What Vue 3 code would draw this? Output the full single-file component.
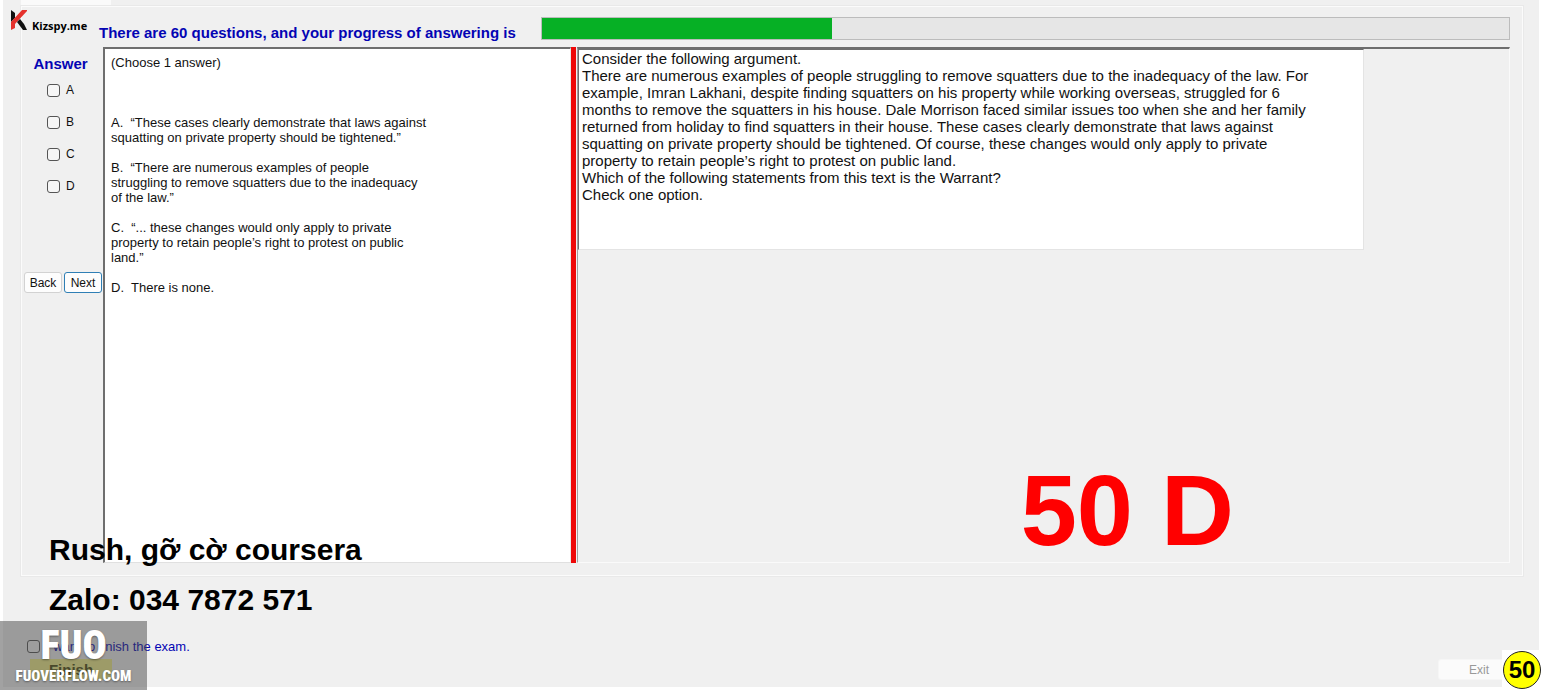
<script setup>
import { ref } from 'vue'

const total = 60
const answered = 18
const options = ['A', 'B', 'C', 'D']
const picked = ref([])
const finished = ref(false)

const choices = `(Choose 1 answer)



A.  “These cases clearly demonstrate that laws against
squatting on private property should be tightened.”

B.  “There are numerous examples of people
struggling to remove squatters due to the inadequacy
of the law.”

C.  “... these changes would only apply to private
property to retain people’s right to protest on public
land.”

D.  There is none.`

const question = `Consider the following argument.
There are numerous examples of people struggling to remove squatters due to the inadequacy of the law. For
example, Imran Lakhani, despite finding squatters on his property while working overseas, struggled for 6
months to remove the squatters in his house. Dale Morrison faced similar issues too when she and her family
returned from holiday to find squatters in their house. These cases clearly demonstrate that laws against
squatting on private property should be tightened. Of course, these changes would only apply to private
property to retain people’s right to protest on public land.
Which of the following statements from this text is the Warrant?
Check one option.`
</script>

<template>
  <div class="page">
    <div class="window">
      <div class="tabs"><span class="tab"></span></div>

      <main class="panel">
        <header class="head">
          <label class="title" for="progress">There are {{ total }} questions, and your progress of answering is</label>
          <progress id="progress" class="bar" :value="answered" :max="total"></progress>
        </header>

        <div class="split">
          <aside class="answers">
            <h2 class="heading">Answer</h2>
            <label v-for="o in options" :key="o" class="option">
              <input v-model="picked" class="check" type="checkbox" :value="o" />{{ o }}
            </label>
            <div class="nav">
              <button class="btn" type="button">Back</button>
              <button class="btn primary" type="button">Next</button>
            </div>
          </aside>
          <section class="choices">{{ choices }}</section>
          <div class="divider"></div>
          <section class="pane">
            <div class="question">{{ question }}</div>
            <div class="stamp">50 D</div>
          </section>
        </div>
      </main>

      <footer class="foot">
        <div class="finish">
          <label class="agree"><input v-model="finished" class="check" type="checkbox" />I want to finish the exam.</label>
          <button class="submit" type="button">Finish</button>
        </div>
        <button class="exit" type="button" disabled>Exit</button>
      </footer>
    </div>

    <div class="brand">
      <svg class="mark" viewBox="0 0 18 21" width="18" height="21" aria-hidden="true">
        <path d="M1 0 L5 3 L5 8 L1 12 Z" fill="#111" />
        <path d="M12 0 L17 0 L17 1 L5 14 L5 18 L1 20 L1 12 Z" fill="#e5322d" />
        <path d="M7 12 L10 9 L14 14 L17 20 L13 20 Z" fill="#111" />
      </svg>
      <span>Kizspy.me</span>
    </div>
    <div class="contact">
      <div>Rush, gỡ cờ coursera</div>
      <div>Zalo: 034 7872 571</div>
    </div>
    <div class="watermark">
      <div class="fuo">FUO</div>
      <div class="site">FUOVERFLOW.COM</div>
    </div>
    <div class="corner"><span class="badge">50</span></div>
  </div>
</template>

<style>
body {
  background: #fff;
}
</style>

<style scoped>
.page {
  position: relative;
  box-sizing: border-box;
  min-height: 100vh;
  display: flex;
  padding: 0 3px 3px;
  font-family: "Liberation Sans", Arial, sans-serif;
  font-size: 13px;
  color: #111;
}
.page * {
  box-sizing: border-box;
}
.window {
  flex: 1;
  min-width: 0;
  display: flex;
  flex-direction: column;
  background: #f0f0f0;
}
.tabs {
  height: 6px;
  padding-left: 18px;
}
.tab {
  display: block;
  width: 90px;
  height: 6px;
  background: #fafafa;
}
.panel {
  flex: 1;
  display: flex;
  flex-direction: column;
  margin: 0 16px 0 18px;
  padding: 0 12px 12px 0;
  border: 1px solid #fbfbfb;
  box-shadow: 0 0 0 1px #e9e9e9;
}
.head {
  display: flex;
  align-items: center;
  gap: 25px;
  height: 40px;
  padding: 2px 0 0 77px;
}
.title {
  padding-top: 8px;
  font-size: 15px;
  font-weight: bold;
  color: #0404b4;
  white-space: nowrap;
}
.bar {
  flex: 1;
  min-width: 0;
  height: 23px;
  appearance: none;
  border: 1px solid #bcbcbc;
  background: #e6e6e6;
}
.bar::-webkit-progress-bar {
  background: #e6e6e6;
}
.bar::-webkit-progress-value {
  background: #06b025;
}
.split {
  flex: 1;
  display: grid;
  grid-template-columns: 81px 468px 5px 1fr;
}
.answers {
  display: flex;
  flex-direction: column;
}
.heading {
  margin: 7px 4px 0 0;
  font-size: 15px;
  line-height: 20px;
  text-align: center;
  color: #0404b4;
}
.option {
  display: flex;
  align-items: center;
  gap: 6px;
  height: 32px;
  padding-left: 25px;
  font-size: 12px;
}
.check {
  appearance: none;
  flex: none;
  width: 13px;
  height: 13px;
  margin: 0;
  border: 1px solid #555;
  border-radius: 3px;
  background: #f6f6f6;
}
.nav {
  display: flex;
  gap: 2px;
  margin-top: 70px;
  padding-left: 2px;
}
.btn {
  width: 38px;
  height: 21px;
  padding: 0;
  border: 1px solid #d2d2d2;
  border-radius: 3px;
  background: #fdfdfd;
  font-family: inherit;
  font-size: 12px;
  color: #111;
}
.primary {
  border-color: #2f7fb5;
}
.choices {
  padding: 6px 6px;
  border-top: 2px solid #6e6e6e;
  border-left: 2px solid #6e6e6e;
  border-right: 1px solid #e9e9e9;
  border-bottom: 1px solid #e0e0e0;
  background: #fff;
  line-height: 15px;
  white-space: pre-wrap;
}
.divider {
  background: #ee0808;
}
.pane {
  position: relative;
  margin-left: 1px;
  border: 1px solid #fafafa;
  border-top: 2px solid #6e6e6e;
  border-left: 1px solid #a0a0a0;
}
.question {
  width: 786px;
  max-width: 100%;
  min-height: 201px;
  padding: 0 3px;
  border: 1px solid #e4e4e4;
  border-top: 1px solid #6e6e6e;
  border-left: 1px solid #6e6e6e;
  background: #fff;
  font-size: 15px;
  line-height: 17px;
  white-space: pre-wrap;
}
.stamp {
  position: absolute;
  right: 275px;
  bottom: 0;
  font-size: 101px;
  line-height: 104px;
  font-weight: bold;
  color: #f00;
}
.foot {
  display: flex;
  justify-content: space-between;
  align-items: flex-end;
  height: 111px;
  padding: 0 19px 7px 24px;
}
.agree {
  display: flex;
  align-items: center;
  gap: 6px;
  height: 25px;
  color: #0404b4;
}
.submit {
  display: block;
  width: 82px;
  height: 21px;
  margin-left: 3px;
  padding: 0;
  border: 0;
  background: #f4f08a;
  font-family: inherit;
  font-size: 15px;
  font-weight: bold;
  color: #4a4a10;
}
.exit {
  width: 82px;
  height: 21px;
  padding: 0;
  border: 1px solid #f6f6f6;
  border-radius: 3px;
  background: #fbfbfb;
  font-family: inherit;
  font-size: 12px;
  color: #999;
}
.brand {
  position: absolute;
  left: 10px;
  top: 10px;
  display: flex;
  gap: 4px;
  font-family: "Open Sans", "Noto Sans", sans-serif;
  font-size: 11px;
  line-height: 32px;
  font-weight: bold;
  color: #000;
}
.contact {
  position: absolute;
  left: 49px;
  bottom: 65px;
  font-size: 30px;
  line-height: 50px;
  font-weight: bold;
  color: #000;
}
.watermark {
  position: absolute;
  left: 0;
  bottom: 0;
  width: 147px;
  height: 69px;
  padding-top: 6px;
  background: rgba(70, 70, 70, 0.5);
  text-align: center;
  font-family: "Roboto Condensed", "Liberation Sans Narrow", "Liberation Sans", sans-serif;
  font-weight: 900;
  color: #fff;
  text-shadow: 0 1px 2px rgba(0, 0, 0, 0.4);
}
.fuo {
  font-size: 40px;
  line-height: 38px;
}
.site {
  font-size: 15px;
  line-height: 22px;
}
.corner {
  position: absolute;
  right: 0;
  bottom: 0;
  width: 40px;
  height: 40px;
  background: #fff;
}
.badge {
  display: block;
  width: 38px;
  height: 38px;
  margin: 1px;
  border: 1px solid #222;
  border-radius: 50%;
  background: #ff0;
  font-size: 24px;
  line-height: 36px;
  font-weight: bold;
  text-align: center;
  color: #000;
}
</style>
